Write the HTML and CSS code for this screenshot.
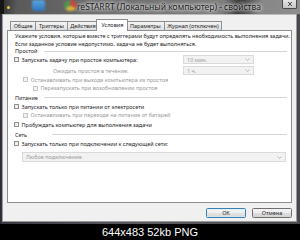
FILE: index.html
```html
<!DOCTYPE html>
<html lang="ru">
<head>
<meta charset="utf-8">
<title>reSTARRT - свойства</title>
<link rel="stylesheet" href="styles.css">
</head>
<body>
<div class="shot">
  <div class="titlebar">
    <span class="desk desk-dark"></span>
    <span class="desk desk-dot"></span>
    <span class="desk desk-blue"></span>
    <span class="desk desk-color"></span>
    <span class="title">reSTARRT (Локальный компьютер) - свойства</span>
    <span class="close"><svg viewBox="0 0 10 6" width="10" height="6"><path d="M3.2 1 L6.8 5 M6.8 1 L3.2 5" stroke="#fff" stroke-width="2.2"/><path d="M3.2 1 L6.8 5 M6.8 1 L3.2 5" stroke="#333" stroke-width="1.1"/></svg></span>
  </div>
  <div class="window">
    <div class="tabs">
      <span class="tab">Общие</span>
      <span class="tab">Триггеры</span>
      <span class="tab">Действия</span>
      <span class="tab active">Условия</span>
      <span class="tab">Параметры</span>
      <span class="tab">Журнал (отключен)</span>
    </div>
    <div class="panel">
      <p class="intro">Укажите условия, которые вместе с триггерами будут определять необходимость выполнения задачи.<br>Если заданное условие недопустимо, задача не будет выполняться.</p>

      <div class="group h7"><span class="group-label">Простой</span><i class="rule"></i></div>
      <div class="row combo-row h10">
        <label class="check"><span class="box"></span>Запускать задачу при простое компьютера:</label>
        <span class="combo">10 мин.<svg class="chev" viewBox="0 0 5 3" width="5" height="3"><path d="M0.5 0.5 L2.5 2.5 L4.5 0.5" fill="none" stroke="#a8a8a8" stroke-width="0.8"/></svg></span>
      </div>
      <div class="row combo-row h10 gap1">
        <span class="wait disabled">Ожидать простоя в течение:</span>
        <span class="combo">1 ч.<svg class="chev" viewBox="0 0 5 3" width="5" height="3"><path d="M0.5 0.5 L2.5 2.5 L4.5 0.5" fill="none" stroke="#a8a8a8" stroke-width="0.8"/></svg></span>
      </div>
      <div class="row h8 indent1">
        <label class="check disabled"><span class="box"></span>Останавливать при выходе компьютера из простоя</label>
      </div>
      <div class="row h9 indent2">
        <label class="check disabled"><span class="box"></span>Перезапускать при возобновлении простоя</label>
      </div>

      <div class="group h10"><span class="group-label">Питание</span><i class="rule"></i></div>
      <div class="row h8">
        <label class="check"><span class="box"></span>Запускать только при питании от электросети</label>
      </div>
      <div class="row h9 indent1">
        <label class="check disabled"><span class="box"></span>Останавливать при переходе на питание от батарей</label>
      </div>
      <div class="row h10">
        <label class="check"><span class="box"></span>Пробуждать компьютер для выполнения задачи</label>
      </div>

      <div class="group h10"><span class="group-label wide">Сеть</span><i class="rule"></i></div>
      <div class="row h8">
        <label class="check"><span class="box"></span>Запускать только при подключении к следующей сети:</label>
      </div>
      <div class="combo net">Любое подключение<svg class="chev" viewBox="0 0 5 3" width="5" height="3"><path d="M0.5 0.5 L2.5 2.5 L4.5 0.5" fill="none" stroke="#a8a8a8" stroke-width="0.8"/></svg></div>
    </div>
    <div class="buttons">
      <button class="btn default">ОК</button>
      <button class="btn">Отмена</button>
    </div>
  </div>
</div>
<div class="footer">644x483 52kb PNG</div>
</body>
</html>
```
FILE: styles.css
```css
* { box-sizing: border-box; }
html, body { margin: 0; padding: 0; }
body {
  width: 300px;
  height: 240px;
  overflow: hidden;
  background: #000;
  font-family: "Noto Sans", "Open Sans", sans-serif;
  font-size: 5.5px;
  color: #1e1e1e;
}
.shot {
  height: 224px;
  display: flex;
  flex-direction: column;
  background: linear-gradient(90deg, #2a2630 0, #3b3844 2px, #5c5c60 50%, #4a4a4e 100%);
}
.titlebar {
  height: 14px;
  flex: none;
  display: flex;
  align-items: center;
  background: linear-gradient(100deg, #2a2a2a 0%, #5a5a5a 6%, #6a6a6a 30%, #747474 60%, #7c7c7c 74%, #333 79%, #424242 81%, #878787 87%, #8e8e8e 100%);
  overflow: hidden;
}
.desk { flex: none; display: block; }
.desk-dark { width: 4px; height: 14px; background: #151515; }
.desk-dot { width: 3px; height: 3px; margin-left: 3px; border-radius: 50%; background: #e6c63a; filter: blur(0.5px); }
.desk-blue { width: 13px; height: 11px; margin-left: 22px; align-self: flex-start; border-radius: 2px; background: linear-gradient(#5ab0f0, #2a78c8); filter: blur(1px); opacity: 0.9; }
.desk-color { width: 13px; height: 11px; margin-left: 19px; align-self: flex-start; border-radius: 50%; background: conic-gradient(#d8453a 0 33%, #e8c23a 33% 66%, #4aa04a 66% 100%); filter: blur(1.2px); opacity: 0.85; }
.title {
  flex: none;
  font-size: 8.5px;
  line-height: 14px;
  color: #1a1a1a;
  text-shadow: 0 0 3px #fff, 0 0 5px rgba(255,255,255,0.8), 0 0 7px rgba(255,255,255,0.6);
  white-space: nowrap;
}
.close {
  margin-left: auto;
  margin-right: 3px;
  align-self: flex-start;
  width: 15px;
  height: 9px;
  display: flex;
  align-items: center;
  justify-content: center;
  border: 1px solid #4a4a4a;
  border-top: none;
  border-radius: 0 0 2px 2px;
  background: linear-gradient(#e6e6e6, #c4c4c4);
}
.window {
  flex: 1;
  margin: 0 3px 2px 2px;
  border: 1px solid #9a9a9a;
  border-top-color: #bdbdbd;
  background: #f0f0f0;
  padding: 4px 4px 3px 4px;
  display: flex;
  flex-direction: column;
}
.tabs {
  height: 11px;
  flex: none;
  display: flex;
  align-items: flex-end;
  padding-left: 3px;
}
.tab {
  height: 9px;
  line-height: 8px;
  padding: 0 2.7px;
  border: 1px solid #8c8e94;
  border-bottom: none;
  margin-right: -1px;
  background: linear-gradient(#f4f4f4, #e9e9e9 50%, #dedede);
  white-space: nowrap;
}
.tab.active {
  line-height: 10px;
  background: #fff;
  margin: 0 -1px -1px -2px;
  padding: 0 4px;
  position: relative;
  z-index: 1;
  height: 12px;
}
.tab.active + .tab { margin-left: -1px; }
.panel {
  height: 173px;
  flex: none;
  border: 1px solid #8c8e94;
  background: #fff;
  padding: 0 5px 0 6px;
}
.intro {
  margin: 0;
  padding: 0.5px 0 0 1px;
  line-height: 8px;
  white-space: nowrap;
}
.row { display: flex; align-items: center; }
.h7 { height: 7px; }
.h8 { height: 8px; }
.h9 { height: 9px; }
.h10 { height: 10px; }
.gap1 { margin-top: 1px; }
.indent1 { padding-left: 9px; }
.indent2 { padding-left: 19px; }
.combo-row {
  display: grid;
  grid-template-columns: 1fr 71px;
  align-items: center;
  padding-right: 32px;
}
.group {
  display: flex;
  align-items: center;
  padding-left: 1px;
}
.group-label { white-space: nowrap; }
.group-label.wide { width: 31px; }
.rule {
  flex: 1;
  margin-left: 6px;
  margin-right: -1px;
  border-top: 1px solid #d4d4d4;
}
.check {
  display: flex;
  align-items: center;
  white-space: nowrap;
}
.box {
  width: 5px;
  height: 5px;
  margin-right: 2.5px;
  border: 1px solid #8f8f8f;
  background: linear-gradient(135deg, #e2e2e2, #fafafa);
  flex: none;
}
.disabled { color: #9a9a9a; }
.check.disabled .box { border-color: #c6c6c6; background: #f4f4f4; }
.wait { padding-left: 39px; white-space: nowrap; }
.combo {
  height: 10px;
  display: flex;
  align-items: center;
  justify-content: space-between;
  padding: 0 3px 0 3px;
  border: 1px solid #dadada;
  background: #f2f2f2;
  color: #9a9a9a;
  white-space: nowrap;
}
.combo-row .combo { height: 9.5px; }
.chev { flex: none; }
.combo.net {
  margin: 4.5px 0 0 8px;
  height: 10px;
}
.buttons {
  margin-top: 5px;
  height: 10px;
  display: flex;
  justify-content: flex-end;
  gap: 6px;
}
.btn {
  width: 40px;
  height: 10px;
  padding: 0;
  font: inherit;
  font-size: 5.5px;
  line-height: 8px;
  color: #1e1e1e;
  border: 1px solid #707070;
  border-radius: 1.5px;
  background: linear-gradient(#f4f4f4, #ececec 50%, #dfdfdf 50%, #d2d2d2);
}
.btn.default {
  border-color: #3c7fb1;
  box-shadow: inset 0 0 0 0.6px #cdebfb;
  background: linear-gradient(#f6f6f6, #eeeeee 50%, #e2e2e2 50%, #d8d8d8);
}
.footer {
  height: 16px;
  background: #000;
  color: #fff;
  font-family: "Liberation Sans", Arial, sans-serif;
  font-size: 11px;
  line-height: 16px;
  text-align: center;
}
```
